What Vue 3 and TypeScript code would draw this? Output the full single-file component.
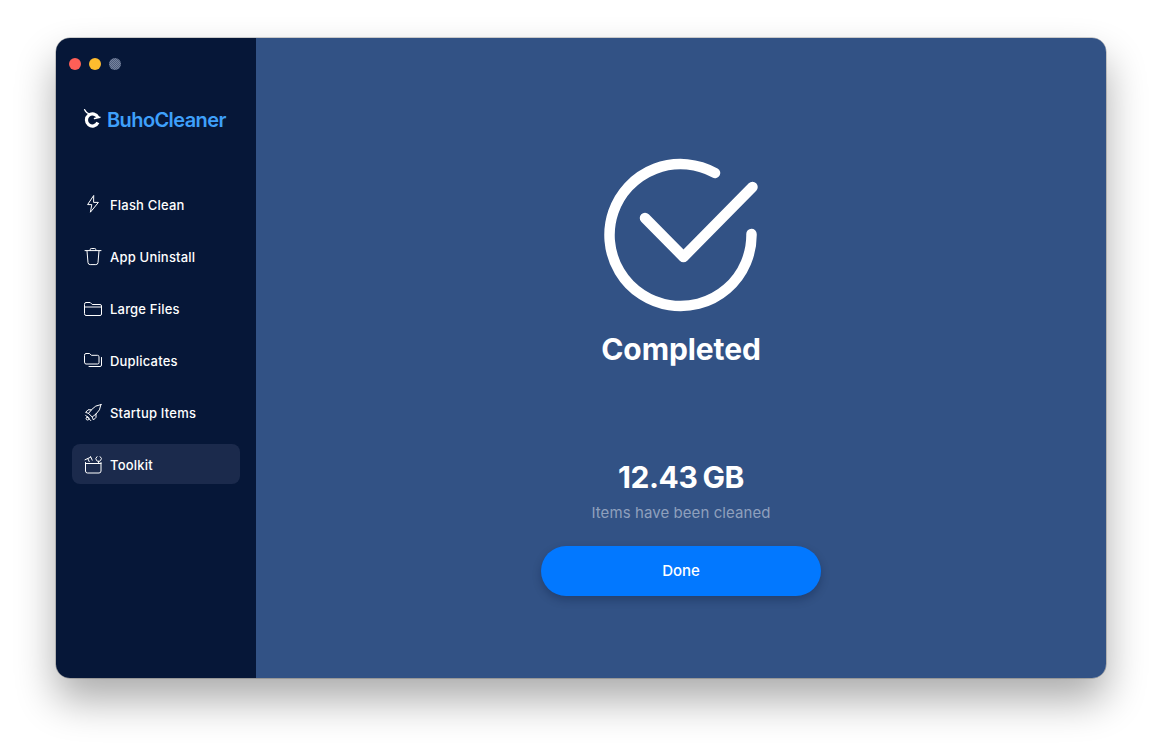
<template>
  <div class="page">
    <div class="window">
      <aside class="sidebar">
        <div class="lights">
          <span class="light red"></span>
          <span class="light yellow"></span>
          <span class="light gray"></span>
        </div>

        <div class="logo">
          <svg class="logo-mark" width="20" height="22" viewBox="0 0 20 22" fill="none">
            <path d="M1.5 1.5 Q3 5 7 6.2" stroke="#fff" stroke-width="1.2" stroke-linecap="round" />
            <path d="M14.9 9.5 A6 6 0 1 0 14.9 14.5" stroke="#fff" stroke-width="3.2" />
            <path d="M11.5 10.5 L17 9.2" stroke="#fff" stroke-width="1.4" stroke-linecap="round" />
          </svg>
          <span class="logo-text">BuhoCleaner</span>
        </div>

        <nav class="nav">
          <div
            v-for="item in items"
            :key="item.label"
            class="nav-item"
            :class="{ active: item.label === active }"
          >
            <svg class="nav-icon" width="20" height="20" viewBox="0 0 20 20" fill="none">
              <path
                v-for="(d, i) in item.paths"
                :key="i"
                :d="d"
                stroke="#fff"
                stroke-width="1"
                stroke-linecap="round"
                stroke-linejoin="round"
              />
            </svg>
            <span>{{ item.label }}</span>
          </div>
        </nav>
      </aside>

      <main class="main">
        <svg class="done-icon" width="160" height="160" viewBox="0 0 160 160" fill="none">
          <path
            d="M114 19 A71 71 0 1 0 150.5 80"
            stroke="#fff"
            stroke-width="10.5"
            stroke-linecap="round"
          />
          <path
            d="M44 64 L82.5 103 L151.5 33"
            stroke="#fff"
            stroke-width="10.5"
            stroke-linecap="round"
            stroke-linejoin="round"
          />
        </svg>
        <h1 class="title">Completed</h1>
        <div class="size">12.43<span class="unit">GB</span></div>
        <p class="caption">Items have been cleaned</p>
        <button class="done-btn" type="button">Done</button>
      </main>
    </div>
  </div>
</template>

<script setup lang="ts">
  const active = 'Toolkit'

  const items: { label: string; paths: string[] }[] = [
    {
      label: 'Flash Clean',
      paths: ['M10.5 .8 L4.6 9.6 H8.8 L7.4 17.2 L15.4 7.4 H11 Z'],
    },
    {
      label: 'App Uninstall',
      paths: [
        'M2 3.6 H18',
        'M7.2 3.4 V2.6 Q7.2 1.5 8.3 1.5 H11.7 Q12.8 1.5 12.8 2.6 V3.4',
        'M4 3.8 L5 15.6 Q5.2 17.6 7.2 17.6 H12.8 Q14.8 17.6 15 15.6 L16 3.8',
      ],
    },
    {
      label: 'Large Files',
      paths: [
        'M1.5 5 Q1.5 3.5 3 3.5 H7.2 L9.2 5.5 H17 Q18.5 5.5 18.5 7 V15 Q18.5 16.5 17 16.5 H3 Q1.5 16.5 1.5 15 Z',
        'M1.5 8 H18.5',
      ],
    },
    {
      label: 'Duplicates',
      paths: [
        'M1.5 4 Q1.5 2.5 3 2.5 H6.6 L8.4 4.3 H14.5 Q16 4.3 16 5.8 V11.5 Q16 13 14.5 13 H3 Q1.5 13 1.5 11.5 Z',
        'M18.5 6.5 V14 Q18.5 15.5 17 15.5 H6',
      ],
    },
    {
      label: 'Startup Items',
      paths: [
        'M18 1.5 Q12 2.2 8.6 6.6 L5.6 10.4 L9.2 14 L13 11 Q17.4 7.6 18 1.5 Z',
        'M8.4 6.8 H5 L2.6 9.4 L5.6 10.4',
        'M13 11 V14.4 L10.4 17 L9.2 14',
        'M4.6 14 A1.5 1.5 0 1 0 4.6 17 A1.5 1.5 0 1 0 4.6 14 Z',
        'M2.6 12.2 L7.8 17.6',
      ],
    },
    {
      label: 'Toolkit',
      paths: [
        'M2.5 7.5 V16 Q2.5 18 4.5 18 H16 Q18 18 18 16 V7.5',
        'M2.5 8.5 H18',
        'M2 4.8 L7.6 2.2 M7.6 1.6 L9.2 5.2 M4.8 3.6 L6.2 6.6',
        'M14 1.6 A2.7 2.7 0 1 0 17.2 1.6 M15.6 6 V8',
      ],
    },
  ]
</script>

<style scoped>
  .page {
    box-sizing: border-box;
    height: 752px;
    padding: 38px 56px;
    font-family: Inter, 'Liberation Sans', sans-serif;
    overflow: hidden;
  }

  .window {
    display: flex;
    height: 640px;
    border-radius: 14px;
    overflow: hidden;
    box-shadow:
      0 0 0 0.5px rgba(0, 0, 0, 0.35),
      0 22px 40px rgba(0, 0, 0, 0.33);
  }

  .sidebar {
    box-sizing: border-box;
    width: 200px;
    flex-shrink: 0;
    background: #061738;
    padding: 20px 16px 0;
  }

  .lights {
    display: flex;
    gap: 8px;
    margin-left: -3px;
  }

  .light {
    width: 12px;
    height: 12px;
    border-radius: 50%;
  }

  .red {
    background: #ff5f57;
  }

  .yellow {
    background: #febc2e;
  }

  .gray {
    background: repeating-conic-gradient(#4d5c7c 0 25%, #76839d 0 50%) 0 0 / 2px 2px;
  }

  .logo {
    display: flex;
    align-items: center;
    gap: 4px;
    margin-top: 38px;
    height: 24px;
    padding-left: 11px;
  }

  .logo-mark {
    flex-shrink: 0;
    margin-top: -2px;
  }

  .logo-text {
    font-size: 20px;
    font-weight: 600;
    letter-spacing: -0.6px;
    color: #3ea0fb;
  }

  .nav {
    display: flex;
    flex-direction: column;
    gap: 12px;
    margin-top: 52px;
  }

  .nav-item {
    box-sizing: border-box;
    display: flex;
    align-items: center;
    gap: 7px;
    height: 40px;
    padding: 2px 0 0 11px;
    border-radius: 8px;
    font-size: 13px;
    font-weight: 500;
    letter-spacing: 0.2px;
    color: #fff;
  }

  .nav-item.active {
    background: #1b2a4c;
  }

  .nav-icon {
    flex-shrink: 0;
  }

  .main {
    flex: 1;
    display: flex;
    flex-direction: column;
    align-items: center;
    background: #325285;
    padding-top: 116px;
    color: #fff;
  }

  .done-icon {
    display: block;
  }

  .title {
    margin: 16px 0 0;
    font-size: 30px;
    line-height: 38px;
    font-weight: 700;
    letter-spacing: -0.1px;
  }

  .size {
    margin-top: 90px;
    font-size: 30px;
    line-height: 38px;
    font-weight: 700;
    letter-spacing: -0.4px;
  }

  .unit {
    margin-left: 5px;
  }

  .caption {
    margin: 7px 0 0;
    font-size: 15px;
    line-height: 20px;
    letter-spacing: 0.08px;
    color: #8fa0bd;
  }

  .done-btn {
    width: 280px;
    height: 50px;
    margin-top: 23px;
    padding: 0 0 2px;
    border: none;
    border-radius: 25px;
    background: #0278ff;
    box-shadow: 0 4px 8px rgba(6, 23, 56, 0.3);
    color: #fff;
    font-family: inherit;
    font-size: 15px;
    font-weight: 500;
  }
</style>

<style>
  body {
    background: #fff;
  }
</style>
